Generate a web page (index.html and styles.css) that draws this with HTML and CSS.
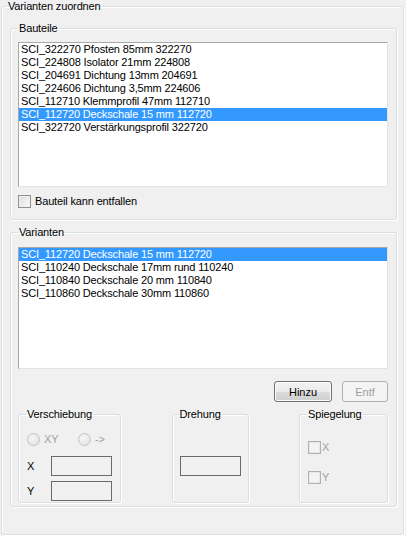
FILE: index.html
```html
<!DOCTYPE html>
<html>
<head>
<meta charset="utf-8">
<title>Varianten zuordnen</title>
<link rel="stylesheet" href="styles.css">
</head>
<body>
<fieldset class="grp outer">
  <legend class="lg-outer">Varianten zuordnen</legend>

  <fieldset class="grp sec bauteile">
    <legend class="lg-sec">Bauteile</legend>
    <div class="list list-bauteile">
      <div class="row">SCI_322270 Pfosten 85mm 322270</div>
      <div class="row">SCI_224808 Isolator 21mm 224808</div>
      <div class="row">SCI_204691 Dichtung 13mm 204691</div>
      <div class="row">SCI_224606 Dichtung 3,5mm 224606</div>
      <div class="row">SCI_112710 Klemmprofil 47mm 112710</div>
      <div class="row sel">SCI_112720 Deckschale 15 mm 112720</div>
      <div class="row">SCI_322720 Verstärkungsprofil 322720</div>
    </div>
    <div class="check-row">
      <span class="cb"></span>
      <span class="check-label">Bauteil kann entfallen</span>
    </div>
  </fieldset>

  <fieldset class="grp sec varianten">
    <legend class="lg-sec">Varianten</legend>
    <div class="list list-varianten">
      <div class="row sel">SCI_112720 Deckschale 15 mm 112720</div>
      <div class="row">SCI_110240 Deckschale 17mm rund 110240</div>
      <div class="row">SCI_110840 Deckschale 20 mm 110840</div>
      <div class="row">SCI_110860 Deckschale 30mm 110860</div>
    </div>
    <div class="buttons">
      <button class="btn btn-add">Hinzu</button>
      <button class="btn btn-del" disabled>Entf</button>
    </div>
    <div class="subs">
      <fieldset class="grp sub versch">
        <legend class="lg-sub">Verschiebung</legend>
        <div class="radios">
          <span class="radio"></span><span class="dis r-label r-first">XY</span>
          <span class="radio"></span><span class="dis r-label">-&gt;</span>
        </div>
        <div class="xy-grid">
          <span class="axis">X</span><span class="input"></span>
          <span class="axis">Y</span><span class="input"></span>
        </div>
      </fieldset>
      <fieldset class="grp sub dreh">
        <legend class="lg-sub">Drehung</legend>
        <span class="input"></span>
      </fieldset>
      <fieldset class="grp sub spiegel">
        <legend class="lg-sub">Spiegelung</legend>
        <div class="mirror-row"><span class="cb cb-dis"></span><span class="dis m-label">X</span></div>
        <div class="mirror-row"><span class="cb cb-dis"></span><span class="dis m-label">Y</span></div>
      </fieldset>
    </div>
  </fieldset>
</fieldset>
</body>
</html>
```

FILE: styles.css
```css
html, body {
  margin: 0;
  padding: 0;
  background: #f0f0f0;
}
body {
  width: 406px;
  height: 536px;
  font-family: "Liberation Sans", Arial, sans-serif;
  font-size: 11px;
  line-height: 13px;
  letter-spacing: -0.15px;
  color: #000;
  overflow: hidden;
}

.grp {
  box-sizing: border-box;
  border: 1px solid #d5dfe5;
  border-radius: 3px;
  box-shadow: inset 1px 1px 0 #fff, 1px 1px 0 #fff;
  margin: 0;
  min-width: 0;
}
.grp > legend {
  padding: 0 1px;
  font-size: 11px;
  line-height: 13px;
}

.outer {
  margin-left: 1px;
  width: 403px;
  height: 535px;
  padding: 9px 7px 0 8px;
}
.lg-outer { margin-left: -3px; }

.sec {
  width: 387px;
  padding: 7px 8px 0 7px;
}
.lg-sec { margin-left: 0; }

.bauteile {
  height: 198px;
}
.varianten {
  margin-top: 6px;
  height: 281px;
  padding-top: 8px;
}

.list {
  box-sizing: border-box;
  background: #fff;
  border: 1px solid;
  border-color: #a8a8a8 #e3e3e3 #e3e3e3 #a8a8a8;
}
.list-bauteile { height: 145px; }
.list-varianten { height: 122px; }
.row {
  height: 13px;
  padding-left: 2px;
  white-space: nowrap;
  overflow: hidden;
}
.row.sel {
  background: #3399ff;
  color: #fff;
}

.check-row {
  display: flex;
  align-items: center;
  margin-top: 8px;
  height: 13px;
}
.cb {
  box-sizing: border-box;
  width: 13px;
  height: 13px;
  border: 1px solid #8e8f8f;
  background: linear-gradient(135deg, #dcdcdc, #fbfbfb);
  box-shadow: inset 0 0 0 1px #f0f0f0;
  flex: none;
}
.check-label { margin-left: 4px; }

.buttons {
  display: flex;
  justify-content: flex-end;
  gap: 10px;
  margin-top: 12px;
}
.btn {
  box-sizing: border-box;
  height: 21px;
  padding: 0;
  font-family: "Liberation Sans", Arial, sans-serif;
  font-size: 11px;
  border-radius: 3px;
}
.btn-add {
  width: 58px;
  border: 1px solid #707070;
  background: linear-gradient(#f2f2f2 0%, #ebebeb 50%, #dddddd 51%, #cfcfcf 100%);
  color: #000;
  box-shadow: inset 0 0 0 1px #fcfcfc;
}
.btn-del {
  width: 46px;
  border: 1px solid #adb2b5;
  background: #f4f4f4;
  color: #a0a0a0;
}

.subs {
  display: flex;
  justify-content: space-between;
  margin-top: 6px;
}
.sub {
  height: 95px;
  padding: 0 0 0 8px;
}
.lg-sub { margin-left: -1px; }

.versch { width: 103px; padding-top: 12px; }
.dreh { width: 77px; padding-top: 35px; padding-left: 7px; }
.spiegel { width: 89px; padding-top: 20px; }

.dis { color: #a0a0a0; }

.radios {
  display: flex;
  align-items: center;
  height: 13px;
}
.radio {
  box-sizing: border-box;
  width: 13px;
  height: 13px;
  border-radius: 50%;
  border: 1px solid #c4c4c4;
  background: radial-gradient(circle at 40% 40%, #f6f6f6, #dedede);
  flex: none;
}
.r-label { margin-left: 4px; }
.r-first { width: 34px; }

.xy-grid {
  display: grid;
  grid-template-columns: 24px 61px;
  row-gap: 5px;
  margin-top: 10px;
  align-items: center;
}
.input {
  display: block;
  box-sizing: border-box;
  width: 61px;
  height: 20px;
  border: 1px solid #6b6b6b;
  background: #f0f0f0;
}

.mirror-row {
  display: flex;
  align-items: center;
  height: 13px;
  margin-bottom: 17px;
}
.cb-dis {
  border-color: #b1b1b1;
  background: #f4f4f4;
  box-shadow: inset 0 0 0 1px #e6e6e6;
}
.m-label { margin-left: 1px; }
```
